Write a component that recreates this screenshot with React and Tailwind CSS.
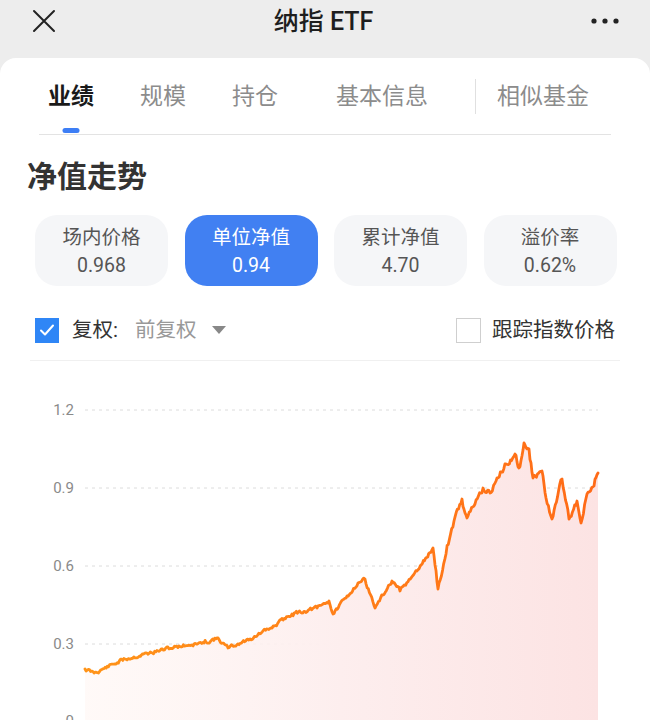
import React from "react";

const FONT = { fontFamily: "Roboto, 'Noto Sans CJK SC', sans-serif" };

// rough shape of the NAV curve, page coordinates
const KEYS = [
  [85, 668], [94, 672], [125, 658], [158, 650], [179, 645], [204, 642],
  [217, 637], [228, 647], [250, 638], [271, 627], [292, 613], [317, 607],
  [329, 600], [333, 613], [346, 597], [358, 582], [365, 578], [375, 607],
  [392, 580], [400, 590], [417, 570], [433, 547], [438, 588], [446, 553],
  [454, 520], [462, 498], [467, 517], [475, 503], [483, 487], [490, 492],
  [496, 480], [506, 463], [515, 453], [519, 467], [524, 442], [529, 448],
  [533, 477], [542, 470], [546, 497], [552, 518], [562, 478], [569, 518],
  [577, 500], [581, 522], [587, 493], [594, 485], [598, 472],
];

const buildPoints = () => {
  let seed = 11;
  const rnd = () => {
    seed = (seed * 9301 + 49297) % 233280;
    return seed / 233280;
  };
  const pts = [];
  let drift = 0;
  for (let i = 0; i < KEYS.length - 1; i++) {
    const [x0, y0] = KEYS[i];
    const [x1, y1] = KEYS[i + 1];
    const n = Math.max(1, Math.round((x1 - x0) / 1.1));
    for (let j = 0; j < n; j++) {
      const t = j / n;
      const amp = x0 > 430 ? 3.2 : 1.9;
      drift = drift * 0.55 + (rnd() - 0.5) * amp * 1.6;
      const noise = j === 0 ? 0 : drift;
      pts.push([x0 + (x1 - x0) * t, y0 + (y1 - y0) * t + noise - 360]);
    }
  }
  const last = KEYS[KEYS.length - 1];
  pts.push([last[0], last[1] - 360]);
  return pts;
};

const points = buildPoints();
const linePath = points
  .map(([x, y], i) => `${i === 0 ? "M" : "L"}${x.toFixed(1)} ${y.toFixed(1)}`)
  .join(" ");
const areaPath = `${linePath} L598 370 L85 370 Z`;

const grid = [
  { label: "1.2", y: 49 },
  { label: "0.9", y: 127 },
  { label: "0.6", y: 205 },
  { label: "0.3", y: 283 },
  { label: "0", y: 360 },
];

const tabs = [
  { name: "业绩", cls: "ml-[9px]" },
  { name: "规模", cls: "ml-[46px]" },
  { name: "持仓", cls: "ml-[46px]" },
  { name: "基本信息", cls: "ml-[58px]" },
];

const stats = [
  { label: "场内价格", value: "0.968" },
  { label: "单位净值", value: "0.94", active: true },
  { label: "累计净值", value: "4.70" },
  { label: "溢价率", value: "0.62%" },
];

const Chart = () => (
  <svg width="650" height="360" viewBox="0 0 650 360" className="block">
    <defs>
      <linearGradient id="fillGrad" x1="0" y1="0" x2="1" y2="0">
        <stop offset="0" stopColor="#fff6f3" stopOpacity="0.6" />
        <stop offset="0.5" stopColor="#fdeeee" />
        <stop offset="1" stopColor="#fce3e3" />
      </linearGradient>
      <linearGradient id="lineGrad" x1="0" y1="0" x2="1" y2="0">
        <stop offset="0" stopColor="#ff9419" />
        <stop offset="1" stopColor="#ff6a17" />
      </linearGradient>
    </defs>
    {grid.map((g) => (
      <g key={g.label}>
        <line
          x1="85"
          x2="598"
          y1={g.y}
          y2={g.y}
          stroke="#dcdcdc"
          strokeWidth="1"
          strokeDasharray="3 4"
        />
        <text
          x="74"
          y={g.y + 5}
          textAnchor="end"
          fontSize="15"
          fill="#8a8a8a"
          style={FONT}
        >
          {g.label}
        </text>
      </g>
    ))}
    <path d={areaPath} fill="url(#fillGrad)" />
    <path
      d={linePath}
      fill="none"
      stroke="url(#lineGrad)"
      strokeWidth="2.8"
      strokeLinejoin="round"
      strokeLinecap="round"
    />
  </svg>
);

const App = () => {
  return (
    <div className="w-[650px] h-[720px] overflow-hidden bg-[#ededed]" style={FONT}>
      {/* top bar */}
      <div className="h-[58px] pb-[16px] flex items-center justify-between pl-[31px] pr-[30px]">
        <svg width="26" height="26" viewBox="0 0 26 26">
          <path d="M3 3L23 23M23 3L3 23" stroke="#222" strokeWidth="2" strokeLinecap="round" />
        </svg>
        <div className="text-[25px] leading-none text-[#1e1e1e] font-medium">纳指 ETF</div>
        <svg width="30" height="8" viewBox="0 0 30 8">
          <circle cx="4" cy="4" r="2.6" fill="#222" />
          <circle cx="15" cy="4" r="2.6" fill="#222" />
          <circle cx="26" cy="4" r="2.6" fill="#222" />
        </svg>
      </div>

      <div className="bg-white rounded-t-[16px] h-[662px]">
        {/* tabs */}
        <div className="mx-[39px] h-[77px] border-b border-[#e3e3e3] flex items-start pt-[23px]">
          {tabs.map((t, i) => (
            <div
              key={t.name}
              className={`relative text-[23px] leading-[32px] ${t.cls} ${
                i === 0 ? "font-bold text-[#1a1a1a]" : "text-[#8c8c8c]"
              }`}
            >
              {t.name}
              {i === 0 && (
                <div className="absolute left-1/2 -translate-x-1/2 top-[47px] w-[17px] h-[5px] rounded-full bg-[#3d7ef5]" />
              )}
            </div>
          ))}
          <div className="ml-[47px] w-px h-[35px] bg-[#e0e0e0] -mt-[2px]" />
          <div className="ml-[21px] text-[23px] leading-[32px] text-[#8c8c8c]">相似基金</div>
        </div>

        {/* section title */}
        <div className="mt-[22px] px-[27px] text-[30px] leading-[40px] font-bold text-[#333]">
          净值走势
        </div>

        {/* stat cards */}
        <div className="mt-[18px] pl-[35px] flex gap-[16.5px]">
          {stats.map((s) => (
            <div
              key={s.label}
              className={`w-[133px] h-[71px] rounded-[22px] pt-[9px] flex flex-col items-center text-[19.5px] leading-[28px] ${
                s.active ? "bg-[#4180f2] text-white" : "bg-[#f5f6f8] text-[#555]"
              }`}
            >
              <div>{s.label}</div>
              <div>{s.value}</div>
            </div>
          ))}
        </div>

        {/* options row */}
        <div className="mt-[26px] h-[36px] mx-[35px] flex items-center justify-between">
          <div className="flex items-center">
            <div className="w-[24px] h-[25px] bg-[#2f86f6] flex items-center justify-center">
              <svg width="16" height="14" viewBox="0 0 16 14">
                <path d="M2 7.5L6 11.5L14 2.5" fill="none" stroke="#fff" strokeWidth="2" strokeLinecap="round" strokeLinejoin="round" />
              </svg>
            </div>
            <div className="ml-[13px] text-[20.5px] leading-none text-[#333]">复权:</div>
            <div className="ml-[17px] text-[20.5px] leading-none text-[#999]">前复权</div>
            <svg className="ml-[15px]" width="16" height="10" viewBox="0 0 16 10">
              <path d="M1 1H15L8 9Z" fill="#888" />
            </svg>
          </div>
          <div className="flex items-center">
            <div className="w-[25px] h-[25px] border-[1.5px] border-[#cfcfcf] bg-white" />
            <div className="ml-[11px] text-[20.5px] leading-none text-[#333]">跟踪指数价格</div>
          </div>
        </div>

        <div className="mt-[12px] mx-[30px] border-b border-[#f0f0f0]" />

        <Chart />
      </div>
    </div>
  );
};

export default App;
